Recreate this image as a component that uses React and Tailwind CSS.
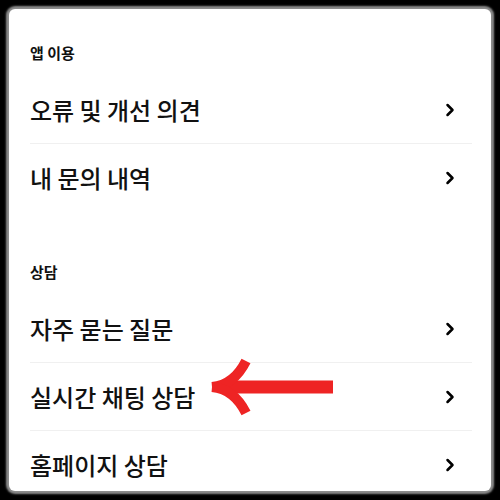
import { ChevronRight } from 'lucide-react';

const sections = [
  { title: '앱 이용', items: ['오류 및 개선 의견', '내 문의 내역'] },
  { title: '상담', items: ['자주 묻는 질문', '실시간 채팅 상담', '홈페이지 상담'] },
];

function Row({ label, last }) {
  return (
    <div className={`flex items-center justify-between h-[68px] ${last ? '' : 'border-b border-[#f0f0f0]'}`}>
      <span className="text-[24px] leading-none font-medium text-[#111]">{label}</span>
      <ChevronRight size={20} strokeWidth={3} className="text-black mr-[12px]" />
    </div>
  );
}

function Arrow() {
  return (
    <svg className="absolute left-[193px] top-[340px]" width="140" height="76" viewBox="0 0 140 76">
      <g fill="none" stroke="#ee2424" strokeWidth="10">
        <path d="M18 38 H131" strokeWidth="13" />
        <path d="M10 38 Q32 36 44 12" />
        <path d="M10 38 Q32 40 44 64" />
      </g>
    </svg>
  );
}

export default function App() {
  return (
    <div
      className="w-[500px] h-[500px] bg-black p-[9px]"
      style={{ fontFamily: '"Noto Sans CJK KR", "Noto Sans", sans-serif' }}
    >
      <div className="relative h-full bg-white rounded-[6px] overflow-hidden pl-[21px] pr-[19px] pt-[34px] shadow-[0_0_2px_3px_rgba(200,200,200,0.7)]">
        {sections.map((s, i) => (
          <div key={s.title} className={i > 0 ? 'mt-[50px]' : ''}>
            <div className="text-[15px] leading-[20px] font-bold text-[#111] mb-[13px]">{s.title}</div>
            {s.items.map((label, j) => (
              <Row key={label} label={label} last={j === s.items.length - 1} />
            ))}
          </div>
        ))}
        <Arrow />
      </div>
    </div>
  );
}
